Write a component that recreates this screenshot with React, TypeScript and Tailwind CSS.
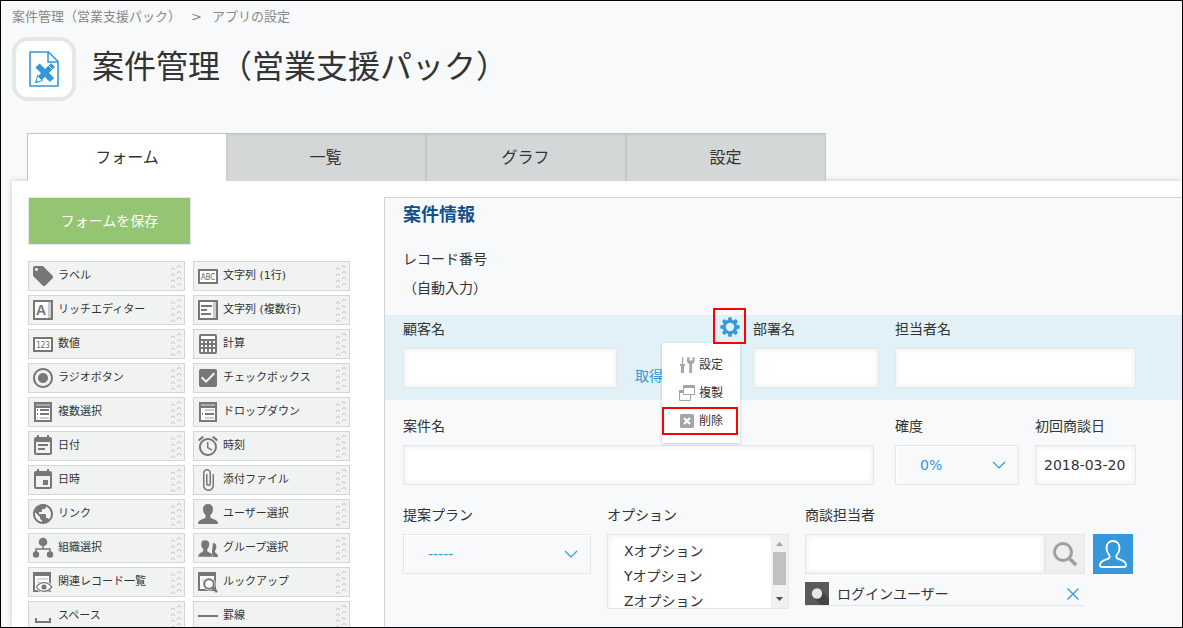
import type { ReactNode } from "react";
import {
  MdAccessAlarm,
  MdAttachFile,
  MdCheckBox,
  MdEvent,
  MdEventNote,
  MdLocalOffer,
  MdPublic,
  MdRadioButtonChecked,
} from "react-icons/md";

const Svg = ({ children }: { children: ReactNode }) => (
  <svg width="24" height="24" viewBox="0 0 24 24" fill="none" aria-hidden="true">
    {children}
  </svg>
);

const BoxText = ({ text }: { text: string }) => (
  <Svg>
    <rect x="3" y="6" width="18" height="13" fill="#fff" stroke="#777" strokeWidth="2" />
    <text
      x="12"
      y="16"
      textAnchor="middle"
      fill="#666"
      className="font-['DejaVu_Sans_Condensed','DejaVu_Sans',sans-serif] text-[8px]"
    >
      {text}
    </text>
  </Svg>
);

const RichIcon = () => (
  <Svg>
    <rect x="3" y="3" width="18" height="18" fill="#fff" stroke="#777" strokeWidth="2" />
    <path d="M17 4h3v16h-3z" fill="#ccc" />
    <text
      x="10"
      y="17"
      textAnchor="middle"
      fill="#777"
      className="font-['Liberation_Sans',sans-serif] text-[14px] font-bold"
    >
      A
    </text>
  </Svg>
);

const MultiLineIcon = () => (
  <Svg>
    <rect x="3" y="3" width="18" height="18" fill="#fff" stroke="#777" strokeWidth="2" />
    <path d="M17 4h3v16h-3z" fill="#ccc" />
    <path d="M5 8h11M5 12h6M5 16h10" stroke="#777" strokeWidth="2" />
  </Svg>
);

const CalcIcon = () => (
  <Svg>
    <rect x="4" y="3" width="16" height="18" rx="1" fill="#777" stroke="#777" strokeWidth="2" />
    <path d="M5 4h14v3H5z" fill="#fff" />
    <path
      d="M5 9h2v2H5zM9 9h2v2H9zM13 9h2v2h-2zM17 9h2v2h-2zM5 13h2v2H5zM9 13h2v2H9zM13 13h2v2h-2zM17 13h2v2h-2zM5 17h2v3H5zM9 17h2v3H9zM13 17h2v3h-2zM17 17h2v3h-2z"
      fill="#fff"
    />
  </Svg>
);

const MultiSelectIcon = () => (
  <Svg>
    <path d="M3 2h18v20H3z" fill="#777" />
    <path d="M5 4h14v2H5z" fill="#aaa" />
    <path d="M5 8h14v12H5z" fill="#fff" />
    <path d="M6 10h1M9 10h9M6 14h1M9 14h9" stroke="#777" strokeWidth="2" />
    <path d="M6 18h1M9 18h9" stroke="#ccc" strokeWidth="2" />
  </Svg>
);

const DropDownIcon = () => (
  <Svg>
    <path d="M3 2h18v20H3z" fill="#777" />
    <path d="M5 4h14v2H5z" fill="#aaa" />
    <path d="M5 8h14v12H5z" fill="#fff" />
    <path d="M6 14h1M9 14h9" stroke="#777" strokeWidth="2" />
    <path d="M9 10h9M9 18h9" stroke="#ccc" strokeWidth="2" />
  </Svg>
);

const person = "M12 2c-3.200 0-5 2-5 5 0 2.600.9 4.800 2.600 6v2c0 1-1.600 1.400-3.600 2.200-2.600 1-4 2-4 4.800h20c0-2.800-1.400-3.800-4-4.800-2-.8-3.600-1.200-3.600-2.200v-2c1.700-1.200 2.600-3.400 2.600-6 0-3-1.800-5-5-5z";

const UserIcon = () => (
  <Svg>
    <path d={person} fill="#777" />
  </Svg>
);

const GroupIcon = () => (
  <Svg>
    <path
      d="M17 7c2 0 3.400 1.200 3.400 3.600 0 1.700-.6 3-1.400 3.900v1.600c0 .9 3 1.200 3 4.900h-6v-6z"
      fill="#777"
    />
    <path
      d="M9 4c-2.500 0-4 1.500-4 4 0 2.200.7 3.900 2 5v2c0 1.200-5 1.200-5 6h15c0-4.800-5.500-4.800-5.500-6v-2c1.200-1.100 2-2.800 2-5C13.500 5.500 11.500 4 9 4z"
      fill="#777"
      stroke="#f1f3f3"
      strokeWidth="0.500"
    />
  </Svg>
);

const OrgIcon = () => (
  <Svg>
    <circle cx="12" cy="6" r="4.300" fill="#777" />
    <circle cx="5" cy="18.500" r="3.200" fill="#777" />
    <circle cx="19" cy="18.500" r="3.200" fill="#777" />
    <path d="M12 9v4M5 17v-4h14v4" stroke="#777" strokeWidth="1.500" />
  </Svg>
);

const RelatedIcon = () => (
  <Svg>
    <path d="M2 2h18v20H2z" fill="#777" />
    <path d="M4 6h14v14H4z" fill="#fff" />
    <path d="M6 9h11M6 12h3" stroke="#ccc" strokeWidth="1.500" />
    <path d="M4 17c2-4 5-5.500 9-5.500S20 13 23 17c-3 4-6 5.500-10 5.500S6 21 4 17z" fill="#f1f3f3" />
    <path
      d="M5.500 17c2-3 4.500-4.300 7.500-4.300s5.500 1.300 7.800 4.300c-2.300 3-4.800 4.300-7.800 4.300S7.500 20 5.500 17z"
      fill="#fff"
      stroke="#777"
      strokeWidth="1.300"
    />
    <circle cx="13" cy="17" r="2.600" fill="#777" />
  </Svg>
);

const LookupIcon = () => (
  <Svg>
    <path d="M2 2h18v19H2z" fill="#777" />
    <path d="M4 6h14v13H4z" fill="#fff" />
    <path d="M6 10h5" stroke="#ccc" strokeWidth="1.500" />
    <circle cx="13" cy="14" r="6.500" fill="#f1f3f3" />
    <circle cx="13" cy="14" r="4.800" fill="#fff" stroke="#777" strokeWidth="2" />
    <path d="M16.500 17.500l4.500 4.500" stroke="#777" strokeWidth="2.500" />
  </Svg>
);

const SpaceIcon = () => (
  <Svg>
    <path d="M5 14v4h14v-4" stroke="#777" strokeWidth="2" />
  </Svg>
);

const LineIcon = () => (
  <Svg>
    <path d="M2 12h20" stroke="#777" strokeWidth="2" />
  </Svg>
);

const Grip = () => (
  <svg width="12" height="24" viewBox="0 0 12 24" fill="none" aria-hidden="true">
    {[0, 6, 12, 18].map((y) => (
      <g key={y} transform={`translate(0 ${y})`}>
        <path d="M8.500 3.500a1.500 2 0 0 1 3 0M2.500 6a1.500 2 0 0 1 3 0" fill="#fff" stroke="#bfc2c2" />
      </g>
    ))}
  </svg>
);

const parts: { label: string; icon: ReactNode }[] = [
  { label: "ラベル", icon: <MdLocalOffer size={24} /> },
  { label: "文字列 (1行)", icon: <BoxText text="ABC" /> },
  { label: "リッチエディター", icon: <RichIcon /> },
  { label: "文字列 (複数行)", icon: <MultiLineIcon /> },
  { label: "数値", icon: <BoxText text="123" /> },
  { label: "計算", icon: <CalcIcon /> },
  { label: "ラジオボタン", icon: <MdRadioButtonChecked size={24} /> },
  { label: "チェックボックス", icon: <MdCheckBox size={24} /> },
  { label: "複数選択", icon: <MultiSelectIcon /> },
  { label: "ドロップダウン", icon: <DropDownIcon /> },
  { label: "日付", icon: <MdEventNote size={24} /> },
  { label: "時刻", icon: <MdAccessAlarm size={24} /> },
  { label: "日時", icon: <MdEvent size={24} /> },
  { label: "添付ファイル", icon: <MdAttachFile size={24} /> },
  { label: "リンク", icon: <MdPublic size={24} /> },
  { label: "ユーザー選択", icon: <UserIcon /> },
  { label: "組織選択", icon: <OrgIcon /> },
  { label: "グループ選択", icon: <GroupIcon /> },
  { label: "関連レコード一覧", icon: <RelatedIcon /> },
  { label: "ルックアップ", icon: <LookupIcon /> },
  { label: "スペース", icon: <SpaceIcon /> },
  { label: "罫線", icon: <LineIcon /> },
];

const tabs = ["フォーム", "一覧", "グラフ", "設定"];

const inputClass =
  "block h-10 border border-[#e3e7e8] bg-white px-2 text-sm text-[#333] shadow-[inset_2px_2px_4px_#f3f3f3,inset_-2px_-2px_4px_#f3f3f3]";

const Field = ({
  id,
  label,
  className,
  children,
}: {
  id: string;
  label: string;
  className?: string;
  children: ReactNode;
}) => (
  <div className={`relative shrink-0 ${className ?? ""}`}>
    <label htmlFor={id} className="mb-[5px] block leading-7">
      {label}
    </label>
    {children}
  </div>
);

const DropDown = ({ id, value }: { id: string; value: string }) => (
  <div className="relative">
    <select
      id={id}
      className="block h-10 w-full appearance-none border border-[#e3e7e8] bg-[#f7f9fa] pl-6 text-sm text-[#3498db] shadow-[inset_1px_1px_0_#fff]"
    >
      <option>{value}</option>
    </select>
    <svg
      width="14"
      height="8"
      viewBox="0 0 14 8"
      fill="none"
      aria-hidden="true"
      className="pointer-events-none absolute top-4 right-[13px]"
    >
      <path d="M1 1l6 6 6-6" stroke="#3498db" strokeWidth="1.200" />
    </svg>
  </div>
);

const Gear = () => (
  <svg width="20" height="20" viewBox="-10 -10 20 20" aria-hidden="true">
    <circle r="5.700" fill="none" stroke="#3498db" strokeWidth="3" />
    {[0, 45, 90, 135, 180, 225, 270, 315].map((a) => (
      <path key={a} d="M-2.200 -6.500L-1.500 -9.700H1.500L2.200 -6.500z" fill="#3498db" transform={`rotate(${a})`} />
    ))}
  </svg>
);

const FieldMenu = () => (
  <div className="absolute top-7 right-[-3px] z-10 w-[78px] bg-white py-2 text-xs shadow-[0_1px_3px_rgba(0,0,0,0.2)]">
    <button className="flex h-7 w-full items-center gap-1 pl-[17px]">
      <svg width="16" height="16" viewBox="0 0 16 16" fill="none" aria-hidden="true">
        <path d="M3.500 0v7" stroke="#a5a5a5" strokeWidth="1.200" />
        <path d="M1 7h5v2H5v7H2V9H1z" fill="#a5a5a5" />
        <path
          d="M8 0.500v3.500c0 1.500 1 2.500 2.300 3V16h2.800V7c1.500-.5 2.400-1.500 2.400-3V.5L13.500 0v3.500h-3V0z"
          fill="#a5a5a5"
        />
      </svg>
      設定
    </button>
    <button className="flex h-7 w-full items-center gap-1 pl-[17px]">
      <svg width="16" height="16" viewBox="0 0 16 16" fill="none" aria-hidden="true">
        <path d="M.5 5.500h11v10H.5z" stroke="#a5a5a5" />
        <path d="M0 5h5v3H0z" fill="#a5a5a5" />
        <path d="M4.500.5h11v9h-11z" fill="#fff" stroke="#a5a5a5" />
        <path d="M4 0h12v3H4z" fill="#a5a5a5" />
      </svg>
      複製
    </button>
    <button className="flex h-7 w-[76px] items-center gap-1 border-2 border-[#f00] pl-[15px]">
      <svg width="16" height="16" viewBox="0 0 16 16" aria-hidden="true">
        <rect x="1" y="1" width="14" height="14" rx="1.500" fill="#a5a5a5" />
        <path d="M5 5l6 6M11 5l-6 6" stroke="#fff" strokeWidth="2.200" />
      </svg>
      削除
    </button>
  </div>
);

const Header = () => (
  <header className="pl-[11px]">
    <nav className="flex h-[26px] items-center pt-1.5 text-[13px] text-[#888]">
      <a href="#app">案件管理（営業支援パック）</a>
      <span className="mx-2.5">&gt;</span>
      <a href="#settings">アプリの設定</a>
    </nav>
    <div className="mt-2.5 flex items-start">
      <div className="flex size-16 items-center justify-center rounded-2xl border-4 border-[#e3e7e8] bg-white">
        <svg width="32" height="38" viewBox="0 0 32 38" fill="none" aria-hidden="true">
          <path d="M2 2h18.500l9.500 9.500V36H2z" stroke="#3498db" strokeWidth="1.600" />
          <path d="M20 2v10h10" stroke="#3498db" strokeWidth="1.500" />
          {/* ruler */}
          <path d="M9.500 15.500L24 30" stroke="#3498db" strokeWidth="6" />
          <path
            d="M12 20.500l2-2M18 26.500l2-2M21 29.500l2-2"
            stroke="#fff"
            strokeWidth=".7"
            transform="translate(-3 3)"
          />
          {/* pencil */}
          <path d="M25 15L11.500 28.500" stroke="#3498db" strokeWidth="5.500" />
          <path d="M9.500 25.500l5 5-6.500 2z" fill="#fff" stroke="#3498db" />
          <path d="M8.200 30l2 2-3.200 1.200z" fill="#3498db" />
          <path d="M20.500 15.500l4.500 4.500" stroke="#fff" strokeWidth=".9" />
        </svg>
      </div>
      <h1 className="ml-4 text-[32px] leading-[60px] text-[#333]">案件管理（営業支援パック）</h1>
    </div>
  </header>
);

const Tabs = () => (
  <nav className="relative z-10 mt-8 ml-[26px] flex">
    {tabs.map((tab, i) => (
      <a
        key={tab}
        href={`#tab-${i}`}
        className={
          i === 0
            ? "flex h-12 w-[199px] items-center justify-center border-t border-l border-[#bfc4c5] bg-white text-base"
            : "flex h-12 w-[200px] items-center justify-center border-t border-r border-[#bfc4c5] bg-[#d3d7d8] text-base shadow-[inset_1px_1px_2px_#c4c8c9]"
        }
      >
        {tab}
      </a>
    ))}
  </nav>
);

const Palette = () => (
  <aside className="w-[372px] shrink-0 pt-4 pl-4">
    <button className="h-12 w-[163px] border border-[#e3e7e8] bg-[#93c572] text-sm text-white">
      フォームを保存
    </button>
    <ul className="mt-4 grid grid-cols-[157px_157px] gap-x-2 gap-y-1">
      {parts.map((part) => (
        <li
          key={part.label}
          className="flex h-[30px] cursor-move items-center border border-[#d1d6d7] bg-[#f1f3f3] pr-[3px] pl-0.5 text-[11px] text-[#777]"
        >
          {part.icon}
          <span className="ml-[3px] flex-1 whitespace-nowrap text-[#333]">{part.label}</span>
          <Grip />
        </li>
      ))}
    </ul>
  </aside>
);

const Form = () => (
  <section className="mt-4 min-w-0 flex-1 overflow-hidden border-t border-l border-[#d1d6d7] bg-[#f7f9fa] text-sm">
    <div className="pl-[18px]">
      <h2 className="text-lg leading-[34px] font-bold text-[#134f8f]">案件情報</h2>
      <div className="mt-[15px] leading-6">レコード番号</div>
      <div className="leading-[34px]">（自動入力）</div>
    </div>

    <div className="mt-2.5 flex gap-4 bg-[#e2f1f7] pb-3 pl-[18px]">
      <Field id="customer" label="顧客名" className="w-[334px]">
        <div className="flex">
          <input id="customer" className={`${inputClass} w-[214px]`} />
          <button className="mt-4 ml-[18px] text-[#3498db]">取得</button>
        </div>
        <button
          aria-label="フィールドの設定"
          className="absolute top-[-7px] right-[-9px] z-20 flex h-9 w-[33px] items-center justify-center border-2 border-[#f00] pt-0.5"
        >
          <Gear />
        </button>
        <FieldMenu />
      </Field>
      <Field id="department" label="部署名" className="w-[126px]">
        <input id="department" className={`${inputClass} w-full`} />
      </Field>
      <Field id="person" label="担当者名" className="w-[241px]">
        <input id="person" className={`${inputClass} w-full`} />
      </Field>
    </div>

    <div className="mt-3 flex gap-4 pl-[18px]">
      <Field id="title" label="案件名" className="w-[476px] pr-[5px]">
        <input id="title" className={`${inputClass} w-full`} />
      </Field>
      <Field id="accuracy" label="確度" className="w-[124px]">
        <DropDown id="accuracy" value="0%" />
      </Field>
      <Field id="first-date" label="初回商談日" className="w-[101px]">
        <input id="first-date" defaultValue="2018-03-20" className={`${inputClass} w-full`} />
      </Field>
    </div>

    <div className="mt-4 flex gap-4 pl-[18px]">
      <Field id="plan" label="提案プラン" className="w-[188px]">
        <DropDown id="plan" value="-----" />
      </Field>
      <Field id="option" label="オプション" className="w-[182px]">
        <div className="flex h-[75px] border border-[#e3e7e8] bg-white shadow-[inset_2px_2px_4px_#f3f3f3]">
          <select id="option" multiple className="h-full flex-1 overflow-hidden pt-[5px] text-sm">
            <option className="h-[25px] py-0 pl-4 leading-[25px]">Xオプション</option>
            <option className="h-[25px] py-0 pl-4 leading-[25px]">Yオプション</option>
            <option className="h-[25px] py-0 pl-4 leading-[25px]">Zオプション</option>
          </select>
          <div className="flex w-[17px] flex-col items-center bg-[#f1f1f1]" aria-hidden="true">
            <svg width="17" height="17" viewBox="0 0 17 17">
              <path d="M5 11h7l-3.500-4z" fill="#a3a3a3" />
            </svg>
            <div className="w-[13px] flex-1 bg-[#c1c1c1]" />
            <svg width="17" height="23" viewBox="0 0 17 23">
              <path d="M5 12h7l-3.500 4z" fill="#505050" />
            </svg>
          </div>
        </div>
      </Field>
      <Field id="staff" label="商談担当者" className="w-[328px]">
        <div className="flex">
          <input id="staff" className={`${inputClass} w-[240px]`} />
          <button
            aria-label="検索"
            className="flex size-10 items-center justify-center border border-[#e3e7e8] bg-[#efefef]"
          >
            <svg width="26" height="26" viewBox="0 0 26 26" fill="none" aria-hidden="true">
              <circle cx="11" cy="11" r="8.500" stroke="#9f9f9f" strokeWidth="3" />
              <path d="M17 17l7 7" stroke="#9f9f9f" strokeWidth="3.500" />
            </svg>
          </button>
          <button
            aria-label="ユーザーを選択"
            className="ml-2 flex size-10 items-center justify-center bg-[#3498db]"
          >
            <svg width="30" height="30" viewBox="0 0 30 30" fill="none" aria-hidden="true">
              <path
                d="M15 2c-4.200 0-6.500 3-6.500 7 0 3.500 1.200 5.500 2.800 7.200.8 1 .6 2.600-.6 3.200-3 1.500-8.700 2.200-8.700 6.600 0 1.300.6 2 1.800 2h22.400c1.200 0 1.800-.7 1.800-2 0-4.400-5.700-5.100-8.700-6.600-1.200-.6-1.400-2.200-.6-3.200 1.600-1.700 2.800-3.700 2.800-7.200 0-4-2.300-7-6.500-7z"
                stroke="#fff"
                strokeWidth="1.800"
              />
            </svg>
          </button>
        </div>
        <div className="mt-2 flex h-6 w-[280px] items-center border-b border-[#e3e7e8]">
          <svg width="24" height="23" viewBox="0 0 24 23" aria-hidden="true">
            <path d="M0 0h24v23H0z" fill="#5a5a5a" />
            <path d="M16 8l8 8v7H16l-8-8z" fill="#444" />
            <circle cx="12" cy="11.500" r="5.200" fill="#e3e7e8" />
          </svg>
          <span className="ml-2 flex-1">ログインユーザー</span>
          <button aria-label="ログインユーザーを外す" className="mr-1.5">
            <svg width="12" height="12" viewBox="0 0 12 12" fill="none" aria-hidden="true">
              <path d="M.5.5l11 11M11.500.5l-11 11" stroke="#3498db" strokeWidth="1.300" />
            </svg>
          </button>
        </div>
      </Field>
    </div>
  </section>
);

const App = () => {
  return (
    <div className="flex h-screen w-full flex-col overflow-hidden border border-black bg-[#f7f9fa] font-['DejaVu_Sans','Noto_Sans_CJK_JP',sans-serif] text-[#333]">
      <Header />
      <Tabs />
      <main className="ml-[11px] flex min-h-0 flex-1 bg-white shadow-[0_0_6px_rgba(0,0,0,0.2)]">
        <Palette />
        <Form />
      </main>
    </div>
  );
};

export default App;
